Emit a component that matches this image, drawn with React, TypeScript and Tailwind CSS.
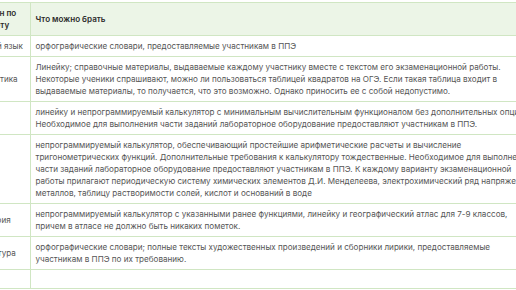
const rows = [
  {
    subject: "Русский язык",
    lines: ["орфографические словари, предоставляемые участникам в ППЭ"],
  },
  {
    subject: "Математика",
    lines: [
      "Линейку; справочные материалы, выдаваемые каждому участнику вместе с текстом его экзаменационной работы.",
      "Некоторые ученики спрашивают, можно ли пользоваться таблицей квадратов на ОГЭ. Если такая таблица входит в",
      "выдаваемые материалы, то получается, что это возможно. Однако приносить ее с собой недопустимо.",
    ],
  },
  {
    subject: "Физика",
    lines: [
      "линейку и непрограммируемый калькулятор с минимальным вычислительным функционалом без дополнительных опций.",
      "Необходимое для выполнения части заданий лабораторное оборудование предоставляют участникам в ППЭ.",
    ],
  },
  {
    subject: "Химия",
    lines: [
      "непрограммируемый калькулятор, обеспечивающий простейшие арифметические расчеты и вычисление",
      "тригонометрических функций. Дополнительные требования к калькулятору тождественные. Необходимое для выполнения",
      "части заданий лабораторное оборудование предоставляют участникам в ППЭ. К каждому варианту экзаменационной",
      "работы прилагают периодическую систему химических элементов Д.И. Менделеева, электрохимический ряд напряжений",
      "металлов, таблицу растворимости солей, кислот и оснований в воде",
    ],
  },
  {
    subject: "География",
    lines: [
      "непрограммируемый калькулятор с указанными ранее функциями, линейку и географический атлас для 7-9 классов,",
      "причем в атласе не должно быть никаких пометок.",
    ],
  },
  {
    subject: "Литература",
    lines: [
      "орфографические словари; полные тексты художественных произведений и сборники лирики, предоставляемые",
      "участникам в ППЭ по их требованию.",
    ],
  },
];

const App = () => {
  return (
    <div className="bg-white w-[516px] h-[290px] overflow-hidden pt-[2px] font-['Inter','Noto_Sans',sans-serif]">
      <table className="table-fixed border-collapse -ml-[36px] w-[568px] text-[8.1px] leading-[12px] text-[#555]">
        <colgroup>
          <col className="w-[66px]" />
          <col className="w-[502px]" />
        </colgroup>
        <thead>
          <tr className="bg-[#ecf5e7] border-y border-[#d0e6c3]">
            <th className="pl-[5px] pr-[3px] py-1 text-left font-semibold text-[#2b2b2b] border-r border-[#d0e6c3]">
              Экзамен по предмету
            </th>
            <th className="pl-[5px] pr-[5px] py-1 text-left font-semibold text-[#2b2b2b]">
              Что можно брать
            </th>
          </tr>
        </thead>
        <tbody>
          {rows.map((row) => (
            <tr key={row.subject} className="border-b border-[#d0e6c3]">
              <td className="pl-[5px] pr-[3px] py-1 align-middle whitespace-nowrap border-r border-[#d0e6c3]">
                {row.subject}
              </td>
              <td className="pl-[5px] pr-[5px] py-1 align-middle whitespace-nowrap">
                {row.lines.map((line, i) => (
                  <span key={i} className="block">
                    {line}
                  </span>
                ))}
              </td>
            </tr>
          ))}
          <tr className="border-b border-[#d0e6c3]">
            <td className="h-[19px] border-r border-[#d0e6c3]"></td>
            <td className="h-[19px]"></td>
          </tr>
        </tbody>
      </table>
    </div>
  );
};

export default App;
